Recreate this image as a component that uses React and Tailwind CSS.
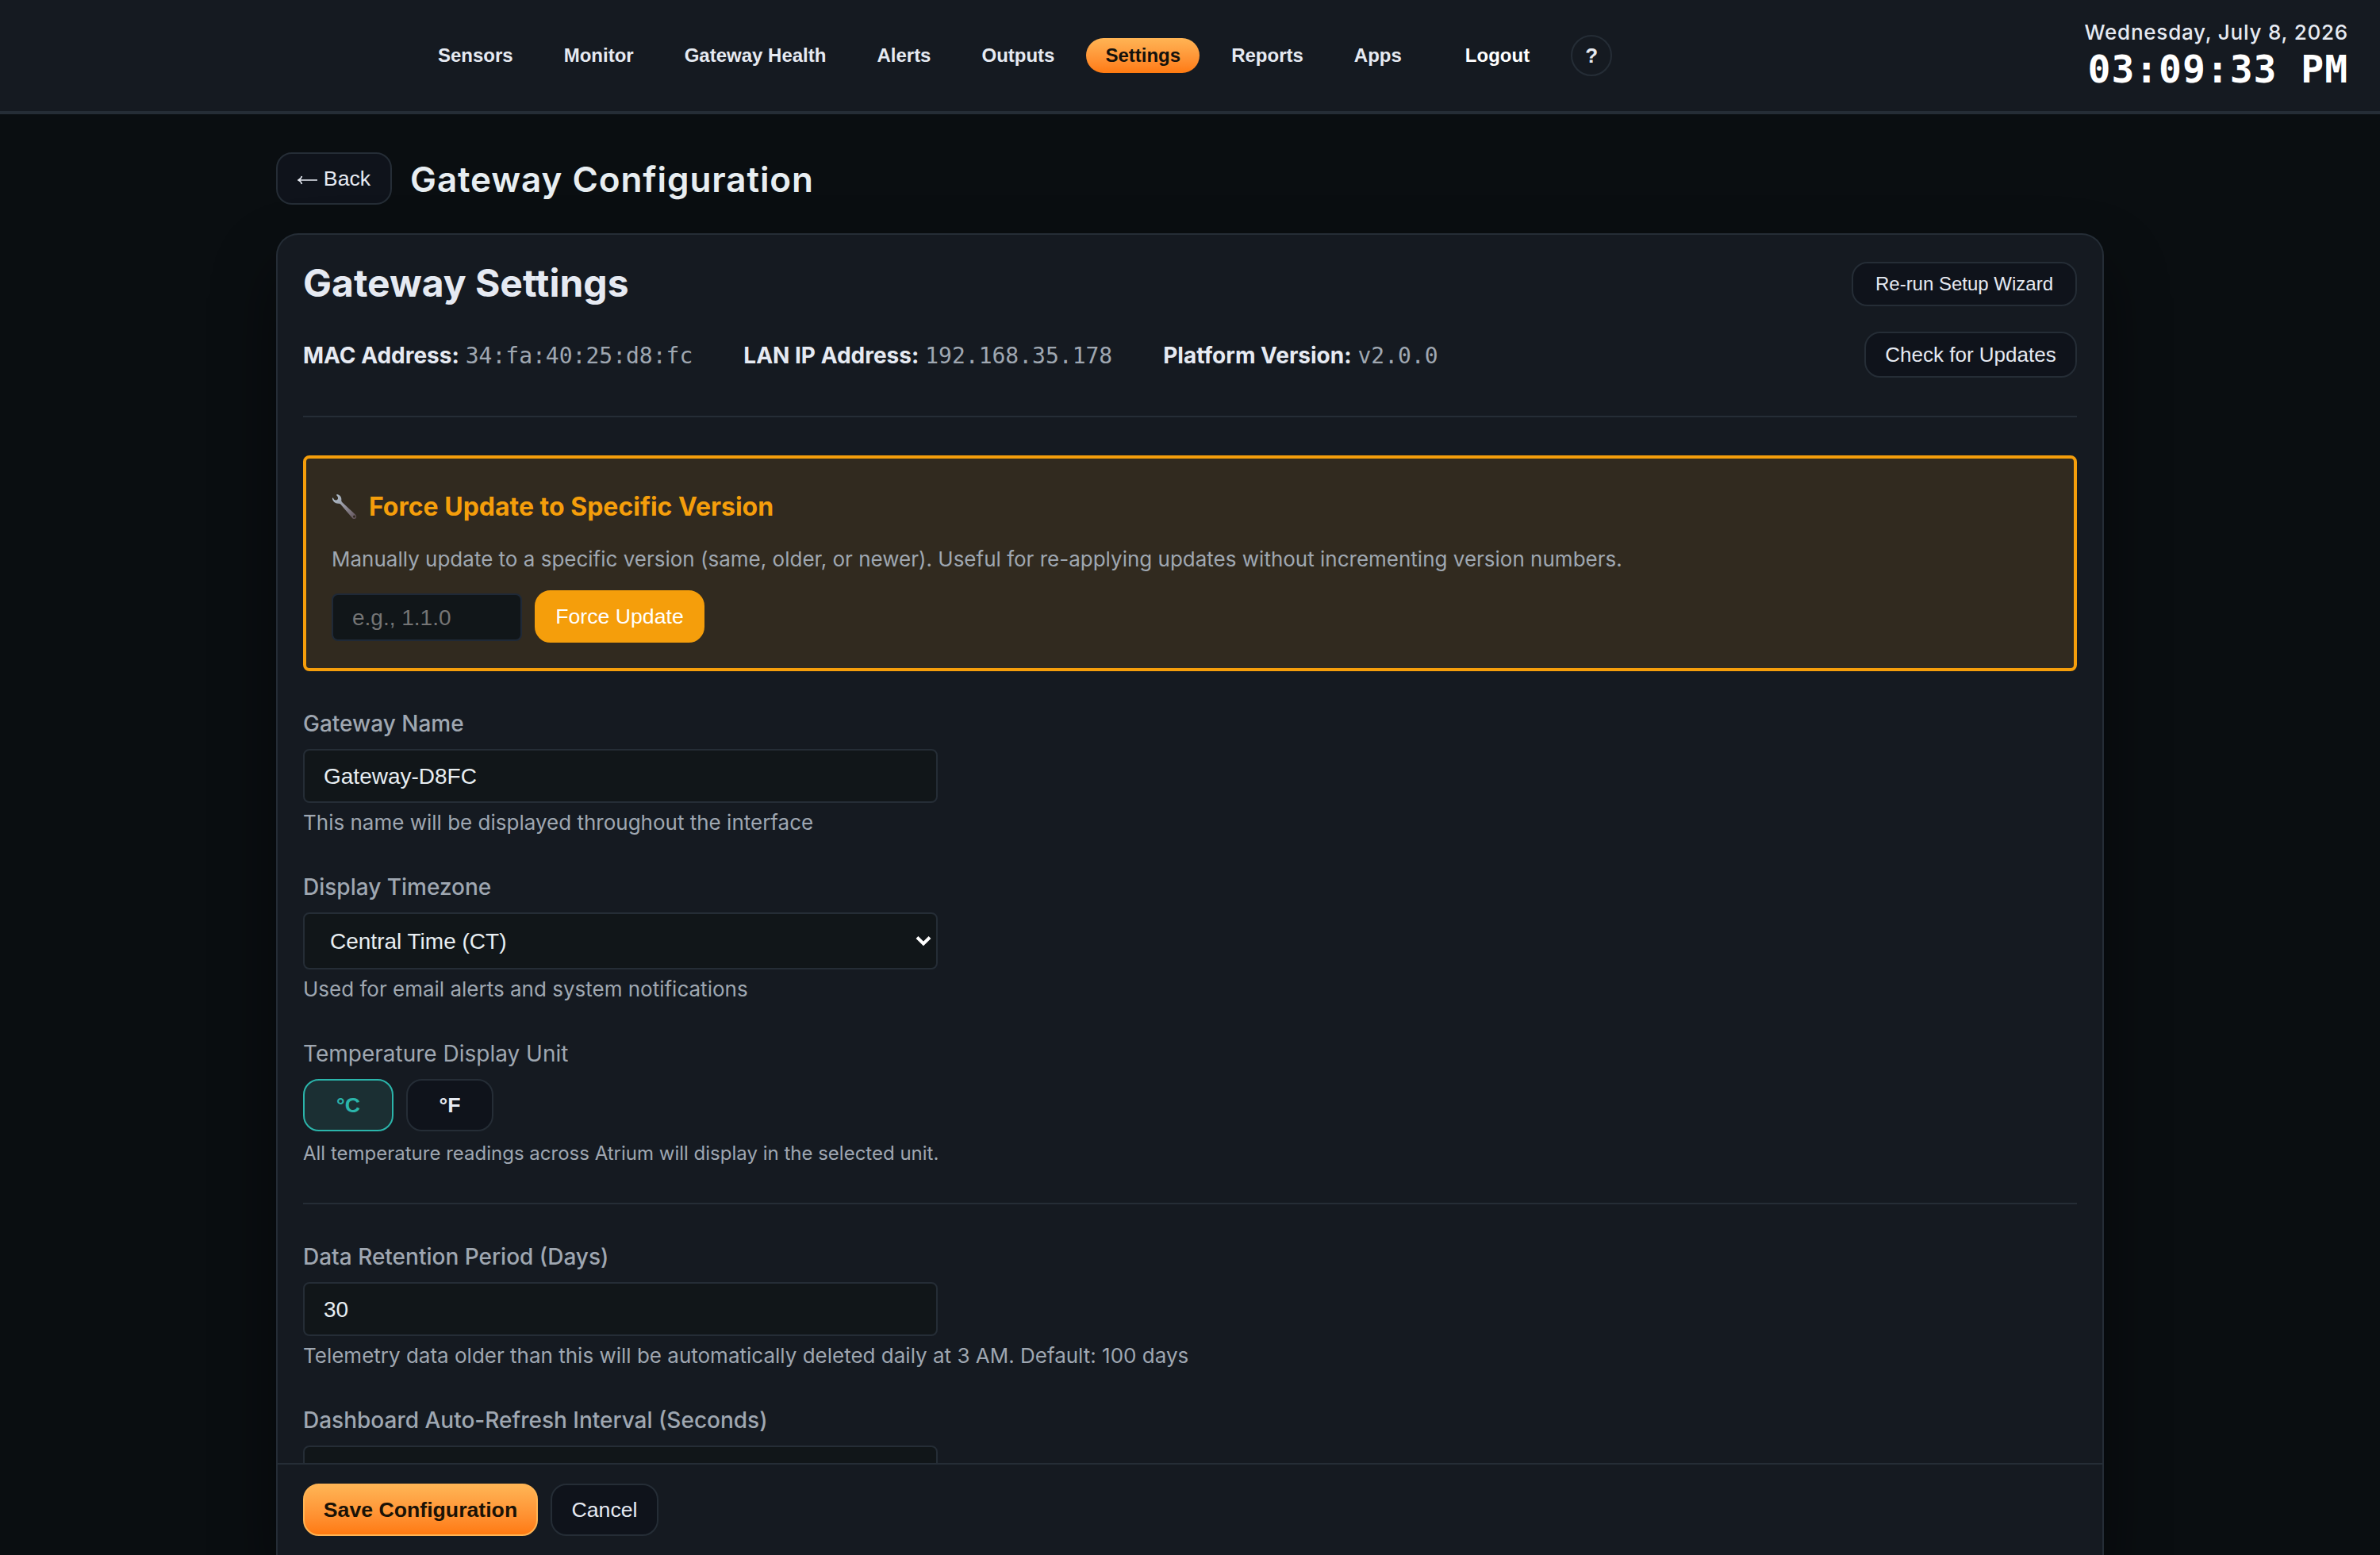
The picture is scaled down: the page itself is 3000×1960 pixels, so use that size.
const navItems = ["Sensors", "Monitor", "Gateway Health", "Alerts", "Outputs", "Settings", "Reports", "Apps"];

const Button = ({ className = "", children }) => {
    return (
        <button className={`flex shrink-0 items-center justify-center whitespace-nowrap rounded-[20px] border-2 font-['Liberation_Sans',Arial,sans-serif] tracking-normal ${className}`}>
            {children}
        </button>
    )
}

const Header = () => {
    return (
        <header className="flex h-[144px] shrink-0 items-center border-b-4 border-[#252d36] bg-[#151a21] pl-[528px] pr-10">
            <nav className="flex items-center gap-4 font-['Liberation_Sans',Arial,sans-serif] text-[24px] font-bold leading-7 tracking-normal">
                {navItems.map((item) => (
                    <a
                        key={item}
                        className={item === "Settings"
                            ? "rounded-full bg-linear-to-b from-[#ffb454] to-[#ff7a0f] px-6 py-2 text-[#14110c]"
                            : "px-6 py-2"}
                    >
                        {item}
                    </a>
                ))}
                <a className="ml-4 px-6 py-2 text-white">Logout</a>
                <button className="ml-3 flex size-[52px] items-center justify-center rounded-full border-2 border-[#252d36] text-[26px]">?</button>
            </nav>
            <div className="ml-auto flex flex-col items-end">
                <div className="pt-px text-[26px] font-medium leading-8 tracking-[0.03em]">Wednesday, July 8, 2026</div>
                <div className="mt-px font-['DejaVu_Sans_Mono',monospace] text-[48px] font-bold leading-[58px] tracking-[0.02em] text-white">03:09:33 PM</div>
            </div>
        </header>
    )
}

const InfoItem = ({ label, value }) => {
    return (
        <div className="whitespace-nowrap pt-0.5">
            <strong className="font-bold">{label}</strong>{" "}
            <span className="font-['DejaVu_Sans_Mono',monospace] text-[#9fa7b1]">{value}</span>
        </div>
    )
}

const Wrench = () => {
    return (
        <svg viewBox="0 0 34 34" className="size-[34px]">
            <defs>
                <linearGradient id="steel" x1="0" y1="0" x2="1" y2="1">
                    <stop offset="0" stopColor="#b4c6d4" />
                    <stop offset="0.5" stopColor="#94939d" />
                    <stop offset="1" stopColor="#5d4c52" />
                </linearGradient>
            </defs>
            <path
                fill="url(#steel)"
                d="M6.500 1C10 1.300 13 4.500 12.300 8.600C12.200 9.600 12.500 10.200 13.200 11L29.600 26.200C31.400 28 31.800 30.200 30.200 31.400C28.800 32.400 26.800 32 25.700 30.400L11.200 13.600C10.500 12.800 9.800 12.600 8.800 12.700C4.600 13 1 9.800 0.900 5.800L2 5.500C2.600 8 4.600 9 6.400 8.300C8.600 7.400 8.700 4.600 6.200 2.200Z"
            />
            <circle cx="28.500" cy="29" r="1.500" fill="#312a1f" />
        </svg>
    )
}

const Field = ({ label, help, className = "", children }) => {
    return (
        <div className={`flex flex-col ${className}`}>
            <label className="text-[28px] font-medium leading-[34px] text-[#9fa7b1]">{label}</label>
            {children}
            {help && <p className="mt-2 text-[26px] leading-[34px] text-[#9fa7b1]">{help}</p>}
        </div>
    )
}

const TextInput = ({ value }) => {
    return (
        <input
            readOnly
            value={value}
            className="mt-[15px] h-[68px] w-[800px] rounded-lg border-2 border-[#252d36] bg-[#111619] px-6 pt-0.5 font-['Liberation_Sans',Arial,sans-serif] text-[28px] text-[#e8eef2]"
        />
    )
}

const App = () => {
    return (
        <div className="flex h-[1960px] flex-col overflow-hidden bg-[#0a0e11] font-[Inter,sans-serif] text-[#e6eaf2] [font-variation-settings:'opsz'_14]">
            <Header />
            <main className="mx-auto flex min-h-0 w-[2304px] grow flex-col">
                <div className="mt-12 flex items-center gap-[23px]">
                    <Button className="h-[66px] w-[146px] gap-2 border-[#252d36] bg-[#0f131b] text-[26.67px]">
                        <svg viewBox="0 0 25 12" className="mt-1 h-3 w-[25px]" fill="none" stroke="currentColor" strokeWidth="1.500">
                            <path d="M1 6H25M5.500 1Q4.500 4.500 1 6Q4.500 7.500 5.500 11" />
                        </svg>
                        Back
                    </Button>
                    <h1 className="pt-0.5 text-[44px] font-semibold leading-[64px] tracking-[0.92px] text-[#e8eef2]">Gateway Configuration</h1>
                </div>

                <section className="mt-9 flex min-h-0 grow flex-col rounded-t-[28px] border-2 border-b-0 border-[#252d36] bg-[#151a21] shadow-[0_40px_80px_rgba(0,0,0,0.45)]">
                    <div className="flex min-h-0 grow flex-col overflow-hidden px-8">
                        <div className="mt-[34px] flex shrink-0 items-center justify-between">
                            <h2 className="pb-0.5 text-[48px] font-bold leading-[54px]">Gateway Settings</h2>
                            <Button className="h-14 w-[284px] border-[#252d36] bg-[#0f131b] text-[24px]">Re-run Setup Wizard</Button>
                        </div>
                        <div className="mt-8 flex h-[58px] shrink-0 items-center gap-16 text-[28px]">
                            <InfoItem label="MAC Address:" value="34:fa:40:25:d8:fc" />
                            <InfoItem label="LAN IP Address:" value="192.168.35.178" />
                            <InfoItem label="Platform Version:" value="v2.0.0" />
                            <Button className="ml-auto h-[58px] w-[268px] border-[#252d36] bg-[#0f131b] text-[26px]">Check for Updates</Button>
                        </div>
                        <hr className="mt-12 shrink-0 border-t-2 border-[#252d36]" />

                        <div className="mt-12 h-[272px] shrink-0 rounded-lg border-4 border-[#f59e0b] bg-[#312a1f] px-8 pt-[35px]">
                            <h3 className="flex items-center gap-[13px] text-[32px] font-bold leading-[52px] text-[#f59e0b]">
                                <Wrench />
                                Force Update to Specific Version
                            </h3>
                            <p className="mt-5 text-[26px] leading-[40px] text-[#9fa7b1]">
                                Manually update to a specific version (same, older, or newer). Useful for re-applying updates without incrementing version numbers.
                            </p>
                            <div className="mt-[19px] flex items-center gap-4">
                                <input
                                    placeholder="e.g., 1.1.0"
                                    className="mt-px h-[60px] w-[240px] rounded-lg border-2 border-[#1f2937] bg-[#111619] px-6 pt-0.5 font-['Liberation_Sans',Arial,sans-serif] text-[28px] placeholder:text-[#757575]"
                                />
                                <Button className="h-[66px] w-[214px] border-[#f59e0b] bg-[#f59e0b] text-[26.67px] text-white">Force Update</Button>
                            </div>
                        </div>

                        <Field label="Gateway Name" help="This name will be displayed throughout the interface" className="mt-[49px] shrink-0">
                            <TextInput value="Gateway-D8FC" />
                        </Field>

                        <Field label="Display Timezone" help="Used for email alerts and system notifications" className="mt-[47px] shrink-0">
                            <div className="mt-[15px] flex h-[72px] w-[800px] items-center justify-between rounded-lg border-2 border-[#252d36] bg-[#111619] pl-8 pr-[6px] font-['Liberation_Sans',Arial,sans-serif] text-[28px] text-[#e8eef2]">
                                <span className="pt-0.5">Central Time (CT)</span>
                                <svg viewBox="0 0 20 14" className="h-[14px] w-5" fill="none" stroke="#ffffff" strokeWidth="4">
                                    <path d="M2 2.500L10 10.500L18 2.500" />
                                </svg>
                            </div>
                        </Field>

                        <div className="mt-[47px] shrink-0 text-[#9fa7b1]">
                            <div className="text-[28px] leading-[34px]">Temperature Display Unit</div>
                            <div className="mt-[15px] flex gap-4">
                                <Button className="h-[66px] w-[114px] border-[#2bb5ab] bg-[#1b2f33] text-[26.67px] font-bold text-[#2bb5ab]">°C</Button>
                                <Button className="h-[66px] w-[110px] border-[#252d36] bg-[#0f131b] text-[26.67px] font-bold text-[#e6eaf2]">°F</Button>
                            </div>
                            <p className="mt-3 text-[24px] leading-8">All temperature readings across Atrium will display in the selected unit.</p>
                        </div>

                        <hr className="mt-[46px] shrink-0 border-t-2 border-[#252d36]" />

                        <Field label="Data Retention Period (Days)" help="Telemetry data older than this will be automatically deleted daily at 3 AM. Default: 100 days" className="mt-[49px] shrink-0">
                            <TextInput value="30" />
                        </Field>

                        <Field label="Dashboard Auto-Refresh Interval (Seconds)" className="mt-[47px] shrink-0">
                            <TextInput value="" />
                        </Field>
                    </div>

                    <footer className="flex h-[116px] shrink-0 items-start gap-4 border-t-2 border-[#252d36] px-8 pt-6">
                        <Button className="h-[66px] w-[296px] border-[#ffb454] bg-linear-to-b from-[#ffb454] to-[#ff7a0f] text-[26.67px] font-bold text-[#1a1206]">Save Configuration</Button>
                        <Button className="h-[66px] w-[136px] border-[#252d36] bg-[#0f131b] text-[26.67px]">Cancel</Button>
                    </footer>
                </section>
            </main>
        </div>
    )
}
export default App;
